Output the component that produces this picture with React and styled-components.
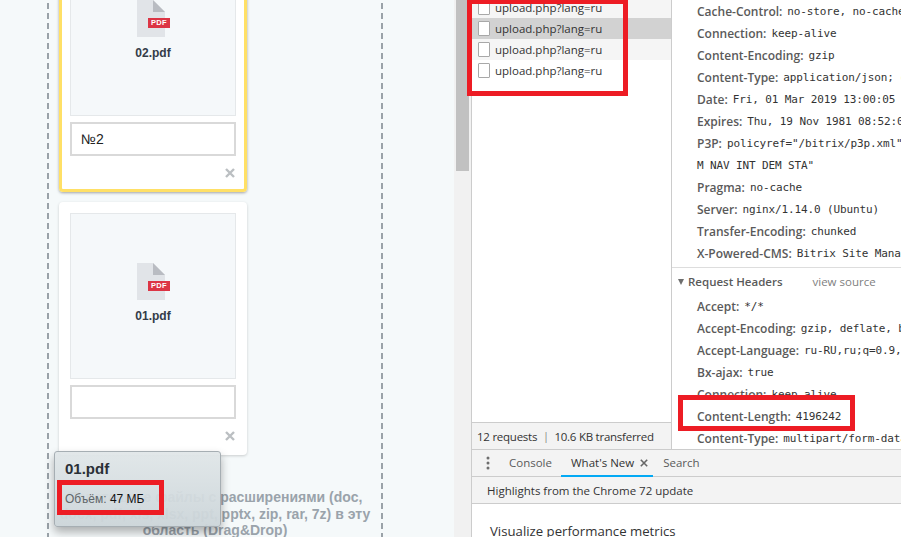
import React from 'react';
import styled, { createGlobalStyle } from 'styled-components';

const Global = createGlobalStyle`
  html, body { margin: 0; padding: 0; width: 901px; height: 537px; overflow: hidden; background: #fff; }
  * { box-sizing: border-box; }
`;

const Page = styled.div`
  position: relative;
  display: flex;
  width: 901px;
  height: 537px;
  overflow: hidden;
`;

const LeftPane = styled.div`
  position: relative;
  width: 454px;
  flex: none;
  background: #f5f9fa;
  padding-left: 47px;
  overflow: hidden;
`;

const DropZone = styled.div`
  width: 336px;
  height: 600px;
  margin-top: -61px;
  padding: 0 12px;
  background:
    linear-gradient(#9aa2a8 65%, transparent 65%) left 4px / 2px 10px repeat-y,
    linear-gradient(#9aa2a8 65%, transparent 65%) right 4px / 2px 10px repeat-y;
`;

const Card = styled.div`
  width: 188px;
  height: 253px;
  margin-bottom: 10px;
  padding: 11px 11px 0;
  background: #fff;
  border-radius: 4px;
  box-shadow: ${p => p.$active
    ? 'inset 0 0 0 3px #ffe066, 0 1px 3px rgba(0,0,0,.35)'
    : '0 1px 3px rgba(0,0,0,.18)'};
`;

const Preview = styled.div`
  height: 166px;
  padding-top: 49px;
  border: 1px solid #e5e8ea;
  background: #f5f8fa;
  display: flex;
  flex-direction: column;
  align-items: center;
`;

const FileIcon = styled.div`
  position: relative;
  width: 28px;
  height: 37px;
  margin-left: -4px;
  line-height: 0;
`;

const PdfBadge = styled.span`
  position: absolute;
  left: 11px;
  top: 18px;
  width: 22px;
  height: 10px;
  background: #dc3545;
  color: #fff;
  font: bold 7.5px/10px "Liberation Sans", Arial, sans-serif;
  letter-spacing: .4px;
  text-align: center;
`;

const FileName = styled.div`
  margin-top: 9px;
  font: bold 12px/14px "Liberation Sans", Arial, sans-serif;
  color: #333c48;
`;

const NameInput = styled.div`
  height: 34px;
  margin-top: 6px;
  padding-left: 9px;
  border: 2px solid #d9d9d9;
  background: #fff;
  font: 14px/30px "Liberation Sans", Arial, sans-serif;
  color: #222;
`;

const CardFooter = styled.div`
  display: flex;
  justify-content: flex-end;
  padding: 12px 1px 0 0;
  line-height: 0;
`;

const DropText = styled.div`
  margin-top: 34px;
  margin-left: -12px;
  width: 336px;
  padding: 0 10px;
  text-align: center;
  font: bold 14px/16.5px "Liberation Sans", Arial, sans-serif;
  color: #9aa3ab;
`;

const Tooltip = styled.div`
  position: absolute;
  left: 54px;
  top: 451px;
  width: 167px;
  height: 76px;
  padding: 8px 10px;
  border: 1px solid #a6aeb3;
  border-radius: 3px;
  background: linear-gradient(#e0e6e8ee, #ccd5d9f2);
  box-shadow: 0 5px 10px rgba(0,0,0,.3);
`;

const TipTitle = styled.div`
  font: bold 15px/17px "Liberation Sans", Arial, sans-serif;
  color: #2a2f36;
`;

const TipMeta = styled.div`
  margin-top: 15px;
  font: 12px/14px "Liberation Sans", Arial, sans-serif;
  color: #5f6669;
  b { font-weight: normal; color: #111; }
`;

const ScrollTrack = styled.div`
  width: 17px;
  flex: none;
  background: #f1f1f1;
  padding: 0 2px;
`;

const ScrollThumb = styled.div`
  height: 171px;
  background: #c1c1c1;
`;

const DevTools = styled.div`
  flex: 1;
  min-width: 0;
  display: flex;
  flex-direction: column;
  border-left: 1px solid #ccc;
  font-family: "Open Sans", sans-serif;
`;

const TopArea = styled.div`
  height: 449px;
  flex: none;
  display: flex;
`;

const ListPane = styled.div`
  width: 199px;
  flex: none;
  display: flex;
  flex-direction: column;
`;

const Rows = styled.div`
  flex: 1;
  margin-top: -3px;
`;

const Row = styled.div`
  height: 21px;
  display: flex;
  align-items: center;
  padding-left: 6px;
  gap: 5px;
  background: ${p => p.$bg || '#fff'};
  font-size: 11.5px;
  color: #333;
`;

const RowIcon = styled.span`
  width: 12px;
  height: 15px;
  background: #fff;
  border: 1px solid #a8a8a8;
  border-radius: 1px;
`;

const StatusBar = styled.div`
  height: 27px;
  border-top: 1px solid #ccc;
  background: #f3f3f3;
  padding-left: 5px;
  display: flex;
  align-items: center;
  font-size: 11.5px;
  letter-spacing: -.25px;
  color: #333;
  white-space: nowrap;
  i { font-style: normal; margin: 0 6px 0 6px; color: #777; font-size: 10px; }
`;

const HeaderPane = styled.div`
  flex: 1;
  min-width: 0;
  border-left: 1px solid #ccc;
  overflow: hidden;
  white-space: nowrap;
`;

const HeaderGroup = styled.div`
  padding-bottom: ${p => (p.$last ? '4px' : '3px')};
  border-bottom: ${p => (p.$last ? 'none' : '1px solid #ddd')};
`;

const HeaderRow = styled.div`
  height: 22px;
  padding-left: 25px;
  display: flex;
  align-items: center;
  gap: 5px;
  font-size: 12px;
  font-weight: 600;
  color: #5a5a5a;
`;

const HeaderValue = styled.span`
  font: 11px "DejaVu Sans Mono", monospace;
  letter-spacing: -.12px;
  color: #333;
`;

const Section = styled.div`
  height: 27px;
  display: flex;
  align-items: center;
  padding-left: 6px;
  font-size: 11.5px;
  font-weight: 600;
  color: #5a5a5a;
`;

const Caret = styled.span`
  width: 0;
  height: 0;
  margin-right: 4px;
  border-left: 3.5px solid transparent;
  border-right: 3.5px solid transparent;
  border-top: 6px solid #6e6e6e;
`;

const ViewSource = styled.span`
  margin-left: 30px;
  font-weight: 400;
  color: #808080;
`;

const Drawer = styled.div`
  flex: 1;
  display: flex;
  flex-direction: column;
  min-height: 0;
`;

const TabBar = styled.div`
  height: 28px;
  flex: none;
  display: flex;
  align-items: stretch;
  border-top: 1px solid #ccc;
  border-bottom: 1px solid #ccc;
  background: #f3f3f3;
  font-size: 11.5px;
  color: #5a5a5a;
`;

const Dots = styled.div`
  width: 32px;
  display: flex;
  justify-content: center;
  align-items: center;
  line-height: 0;
`;

const Tab = styled.div`
  display: flex;
  align-items: center;
  gap: 6px;
  padding: 0 ${p => (p.$active ? '5px' : '9px')} 0 ${p => (p.$active ? '10px' : '5px')};
  margin-bottom: -1px;
  color: ${p => (p.$active ? '#333' : '#5a5a5a')};
  border-bottom: ${p => (p.$active ? '2px solid #03a9f4' : '2px solid transparent')};
`;

const SearchTab = styled(Tab)`
  padding-left: 10px;
`;

const Highlights = styled.div`
  height: 27px;
  flex: none;
  padding-left: 15px;
  display: flex;
  align-items: center;
  background: #f3f3f3;
  border-bottom: 1px solid #ccc;
  font-size: 11.5px;
  color: #333;
`;

const DrawerBody = styled.div`
  padding: 18px 0 0 18px;
  font-size: 13.2px;
  line-height: 18px;
  color: #333;
`;

const RedBox = styled.div`
  position: absolute;
  left: ${p => p.$x}px;
  top: ${p => p.$y}px;
  width: ${p => p.$w}px;
  height: ${p => p.$h}px;
  border: 5px solid #ed1c24;
  pointer-events: none;
`;

const CloseMark = ({ size = 10, color = '#bbbfc2', width = 2.4 }) => (
  <svg width={size} height={size} viewBox="0 0 10 10">
    <path d="M1 1 9 9M9 1 1 9" stroke={color} strokeWidth={width} fill="none" />
  </svg>
);

const PdfGlyph = () => (
  <FileIcon>
    <svg width="28" height="37" viewBox="0 0 28 37">
      <path d="M0 0H16L28 12V37H0Z" fill="#e1e4e8" />
      <path d="M16 0 28 12H16Z" fill="#b9bcc2" />
    </svg>
    <PdfBadge>PDF</PdfBadge>
  </FileIcon>
);

const FileCard = ({ name, note, active }) => (
  <Card $active={active}>
    <Preview>
      <PdfGlyph />
      <FileName>{name}</FileName>
    </Preview>
    <NameInput>{note}</NameInput>
    <CardFooter><CloseMark /></CardFooter>
  </Card>
);

const responseHeaders = [
  ['Cache-Control:', 'no-store, no-cache, must-revalidate'],
  ['Connection:', 'keep-alive'],
  ['Content-Encoding:', 'gzip'],
  ['Content-Type:', 'application/json; charset=UTF-8'],
  ['Date:', 'Fri, 01 Mar 2019 13:00:05 GMT'],
  ['Expires:', 'Thu, 19 Nov 1981 08:52:00 GMT'],
  ['P3P:', 'policyref="/bitrix/p3p.xml", CP="NON DSP COR'],
  ['', 'M NAV INT DEM STA"'],
  ['Pragma:', 'no-cache'],
  ['Server:', 'nginx/1.14.0 (Ubuntu)'],
  ['Transfer-Encoding:', 'chunked'],
  ['X-Powered-CMS:', 'Bitrix Site Manager'],
];

const requestHeaders = [
  ['Accept:', '*/*'],
  ['Accept-Encoding:', 'gzip, deflate, br'],
  ['Accept-Language:', 'ru-RU,ru;q=0.9,en-US'],
  ['Bx-ajax:', 'true'],
  ['Connection:', 'keep-alive'],
  ['Content-Length:', '4196242'],
  ['Content-Type:', 'multipart/form-data; boundary'],
];

const rowColors = ['#f5f5f5', '#d2d2d2', '#f5f5f5', '#fff'];

export default function App() {
  return (
    <Page>
      <Global />
      <LeftPane>
        <DropZone>
          <FileCard name="02.pdf" note="№2" active />
          <FileCard name="01.pdf" />
          <DropText>
            Перетащите файлы с расширениями (doc, docx, pdf, xls, xlsx, ppt, pptx, zip, rar, 7z) в эту область (Drag&amp;Drop)
          </DropText>
        </DropZone>
      </LeftPane>
      <ScrollTrack><ScrollThumb /></ScrollTrack>
      <DevTools>
        <TopArea>
          <ListPane>
            <Rows>
              {rowColors.map((c, i) => (
                <Row key={i} $bg={c}><RowIcon />upload.php?lang=ru</Row>
              ))}
            </Rows>
            <StatusBar>12 requests<i>|</i>10.6 KB transferred</StatusBar>
          </ListPane>
          <HeaderPane>
            <HeaderGroup>
              {responseHeaders.map(([k, v], i) => (
                <HeaderRow key={i}>{k}<HeaderValue>{v}</HeaderValue></HeaderRow>
              ))}
            </HeaderGroup>
            <HeaderGroup $last>
              <Section><Caret />Request Headers<ViewSource>view source</ViewSource></Section>
              {requestHeaders.map(([k, v]) => (
                <HeaderRow key={k}>{k}<HeaderValue>{v}</HeaderValue></HeaderRow>
              ))}
            </HeaderGroup>
          </HeaderPane>
        </TopArea>
        <Drawer>
          <TabBar>
            <Dots>
              <svg width="4" height="14" viewBox="0 0 4 14">
                <circle cx="2" cy="2" r="1.5" fill="#6e6e6e" />
                <circle cx="2" cy="7" r="1.5" fill="#6e6e6e" />
                <circle cx="2" cy="12" r="1.5" fill="#6e6e6e" />
              </svg>
            </Dots>
            <Tab>Console</Tab>
            <Tab $active>What's New<CloseMark size={8} color="#666" width={2} /></Tab>
            <SearchTab>Search</SearchTab>
          </TabBar>
          <Highlights>Highlights from the Chrome 72 update</Highlights>
          <DrawerBody>Visualize performance metrics</DrawerBody>
        </Drawer>
      </DevTools>
      <Tooltip>
        <TipTitle>01.pdf</TipTitle>
        <TipMeta>Объём: <b>47 МБ</b></TipMeta>
      </Tooltip>
      <RedBox $x={467} $y={-1} $w={161} $h={97} />
      <RedBox $x={678} $y={395} $w={177} $h={36} />
      <RedBox $x={57} $y={480} $w={107} $h={35} />
    </Page>
  );
}
